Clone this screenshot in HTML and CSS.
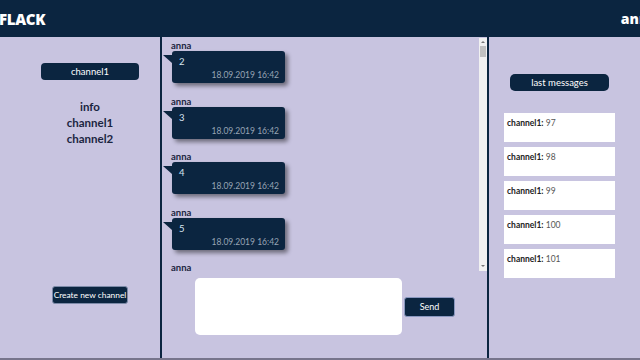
FILE: index.html
```html
<!DOCTYPE html>
<html>
<head>
<meta charset="utf-8">
<link rel="stylesheet" href="styles.css">
</head>
<body>
<header class="topbar">
  <div class="logo">FLACK</div>
  <div class="user">anna</div>
</header>
<main class="layout">
  <aside class="left">
    <button class="btn current">channel1</button>
    <ul class="channels">
      <li>info</li>
      <li>channel1</li>
      <li>channel2</li>
    </ul>
    <button class="btn create">Create new channel</button>
  </aside>
  <section class="center">
    <div class="scrollbox">
      <div class="messages">
        <div class="msg"><div class="name">anna</div><div class="bubble"><div class="text">2</div><div class="time">18.09.2019 16:42</div></div></div>
        <div class="msg"><div class="name">anna</div><div class="bubble"><div class="text">3</div><div class="time">18.09.2019 16:42</div></div></div>
        <div class="msg"><div class="name">anna</div><div class="bubble"><div class="text">4</div><div class="time">18.09.2019 16:42</div></div></div>
        <div class="msg"><div class="name">anna</div><div class="bubble"><div class="text">5</div><div class="time">18.09.2019 16:42</div></div></div>
        <div class="msg"><div class="name">anna</div></div>
      </div>
      <div class="track">
        <span class="arrow up"></span>
        <span class="thumb"></span>
        <span class="arrow down"></span>
      </div>
    </div>
    <div class="compose">
      <textarea class="input"></textarea>
      <button class="btn send">Send</button>
    </div>
  </section>
  <aside class="right">
    <button class="btn last">last messages</button>
    <div class="cards">
      <div class="card"><b>channel1:</b> 97</div>
      <div class="card"><b>channel1:</b> 98</div>
      <div class="card"><b>channel1:</b> 99</div>
      <div class="card"><b>channel1:</b> 100</div>
      <div class="card"><b>channel1:</b> 101</div>
    </div>
  </aside>
</main>
</body>
</html>
```
FILE: styles.css
```css
* { box-sizing: border-box; }
html, body { margin: 0; padding: 0; }
body {
  width: 640px;
  height: 360px;
  overflow: hidden;
  background: #c8c4e0;
  font-family: Lato, "Open Sans", sans-serif;
  color: #1b2540;
  display: flex;
  flex-direction: column;
  border-bottom: 2px solid #77758c;
}
.topbar {
  height: 37px;
  flex: none;
  background: #0b2540;
  color: #fff;
  display: flex;
  align-items: center;
  justify-content: space-between;
  overflow: hidden;
  font-family: "Open Sans", sans-serif;
  font-weight: 800;
}
.logo { font-size: 15px; margin-left: -1px; letter-spacing: -0.3px; }
.user { font-size: 14px; margin-right: -17px; }
.layout {
  flex: 1;
  display: flex;
  min-height: 0;
}
.left {
  width: 162px;
  border-right: 2px solid #0b2540;
  display: flex;
  flex-direction: column;
  align-items: center;
  padding: 26px 0 0 20px;
}
.btn {
  background: #0b2540;
  color: #fff;
  border: none;
  font-family: Lato, sans-serif;
  font-size: 9.5px;
  border-radius: 4px;
  padding: 0;
  white-space: nowrap;
}
.current { width: 98px; height: 17px; }
.channels {
  list-style: none;
  margin: 19px 0 0;
  padding: 0;
  text-align: center;
  font-weight: 700;
  font-size: 11.5px;
  line-height: 16px;
}
.create {
  margin-top: 139px;
  height: 18px;
  padding: 0 1px;
  font-size: 8.4px;
  border: 1px solid #7c8aa8;
  border-radius: 3px;
}
.center {
  width: 327px;
  border-right: 2px solid #0b2540;
  display: flex;
  flex-direction: column;
}
.scrollbox {
  height: 234px;
  flex: none;
  display: flex;
}
.messages {
  flex: 1;
  overflow: hidden;
  padding: 3px 0 0 9px;
}
.track {
  width: 8px;
  margin-top: 1px;
  background: #f1f1f1;
  display: flex;
  flex-direction: column;
  align-items: center;
}
.arrow { width: 0; height: 0; border-left: 2px solid transparent; border-right: 2px solid transparent; }
.arrow.up { border-bottom: 2px solid #777; margin-top: 3px; }
.arrow.down { border-top: 2px solid #777; margin-top: auto; margin-bottom: 4px; }
.thumb { width: 6px; height: 11px; background: #c1c1c1; margin-top: 3px; }
.msg { height: 55.5px; }
.name { font-size: 9.5px; font-weight: 700; line-height: 11px; }
.bubble {
  position: relative;
  margin-left: 1px;
  width: 113px;
  height: 32px;
  background: #0b2540;
  border-radius: 3px;
  box-shadow: 3px 3px 4px rgba(0, 0, 0, 0.45);
  color: #d8e4f0;
  padding: 5px 6px 0 7px;
  display: flex;
  flex-direction: column;
}
.bubble::before {
  content: "";
  position: absolute;
  left: -9px;
  top: 4px;
  border-top: 8px solid #0b2540;
  border-left: 9px solid transparent;
}
.text { font-size: 9.5px; line-height: 12px; }
.time {
  font-size: 8.5px;
  line-height: 10px;
  color: #97a4b4;
  text-align: right;
  margin-top: 2px;
}
.compose {
  display: flex;
  align-items: center;
  gap: 2px;
  padding: 7px 0 0 33px;
}
.input {
  width: 207px;
  height: 57px;
  border: none;
  border-radius: 5px;
  background: #fff;
  resize: none;
  outline: none;
}
.send {
  width: 51px;
  height: 20px;
  border: 1px solid #8a98c0;
  border-radius: 3px;
  font-size: 9px;
}
.right {
  flex: 1;
  display: flex;
  flex-direction: column;
  align-items: center;
  padding: 37px 10px 0 0;
}
.last { width: 99px; height: 17px; border-radius: 5px; }
.cards {
  margin-top: 22px;
  display: flex;
  flex-direction: column;
  gap: 5px;
}
.card {
  width: 111px;
  height: 29px;
  background: #fff;
  font-size: 8.5px;
  color: #555;
  padding: 5px 3px;
  line-height: 11px;
}
.card b { color: #222; }
```
